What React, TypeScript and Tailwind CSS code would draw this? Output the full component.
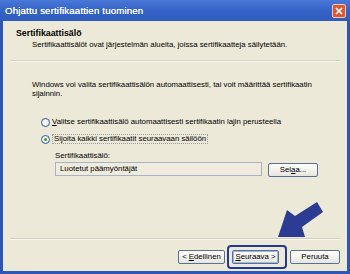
import React from "react";

const font = { fontFamily: '"Liberation Sans", Arial, sans-serif' };

function Radio({ checked }: { checked?: boolean }) {
  return (
    <span className="flex h-[9px] w-[9px] items-center justify-center rounded-full border border-[#2a5a94] bg-[#f4f3ee]">
      {checked && <span className="h-[3px] w-[3px] rounded-full bg-[#2ea52e]" />}
    </span>
  );
}

function Btn({ children, w, def }: { children: React.ReactNode; w: string; def?: boolean }) {
  return (
    <div
      className={`flex h-[14px] items-center justify-center rounded-[2px] border border-[#5a6f94] bg-gradient-to-b from-[#ffffff] to-[#e6e5de] text-[7.8px] leading-none text-black ${w} ${
        def ? "shadow-[inset_0_0_0_1px_#9db5e3]" : ""
      }`}
    >
      {children}
    </div>
  );
}

export default function App() {
  return (
    <div className="relative flex h-[274px] w-[350px] flex-col bg-[#2e56b6]" style={font}>
      {/* title bar */}
      <div className="flex h-[21px] items-center justify-between bg-gradient-to-b from-[#4a78d8] via-[#3463c6] to-[#2f5bbd] pl-[5px] pr-[4px]">
        <span className="text-[9.7px] leading-none tracking-[0.15px] text-white [text-shadow:0_0_0.4px_white]">
          Ohjattu sertifikaattien tuominen
        </span>
        <div className="flex h-[14px] w-[14px] items-center justify-center rounded-[2px] border border-[#f0c8b8] bg-[#da5a38]">
          <svg width="8" height="8" viewBox="0 0 8 8">
            <path d="M1 1 L7 7 M7 1 L1 7" stroke="white" strokeWidth="1.7" />
          </svg>
        </div>
      </div>

      {/* body */}
      <div className="mx-[3px] mb-[3px] flex flex-1 flex-col bg-[#ece9d8] text-[7.8px] text-black">
        <div className="pl-[13px] pt-[7px]">
          <div className="text-[8.8px] font-bold leading-[10px]">Sertifikaattisälö</div>
          <div className="mt-[2px] whitespace-nowrap pl-[16px] leading-[10px]">
            Sertifikaattisälöt ovat järjestelmän alueita, joissa sertifikaatteja säilytetään.
          </div>
        </div>
        <div className="mx-[7px] mt-[10px] border-t border-b border-t-[#d2cfc0] border-b-[#f8f7f1]" />

        <div className="whitespace-nowrap pl-[29px] pt-[18px] leading-[9px]">
          Windows voi valita sertifikaattisälön automaattisesti, tai voit määrittää sertifikaatin
          <br />
          sijainnin.
        </div>

        <div className="mt-[18px] flex flex-col gap-[5px] pl-[38px]">
          <div className="flex h-[12px] items-center gap-[2px]">
            <Radio />
            <span className="whitespace-nowrap leading-none">
              <span className="underline">V</span>alitse sertifikaattisälö automaattisesti sertifikaatin lajin perusteella
            </span>
          </div>
          <div className="flex h-[12px] items-center gap-[2px]">
            <Radio checked />
            <span className="whitespace-nowrap border border-dotted border-[#9a9a9a] px-[1px] leading-none">
              Sijoita kaikki sertifikaatit seuraavaan säilöön
            </span>
          </div>
        </div>

        <div className="mt-[6px] pl-[52px] leading-[10px]">Sertifikaattisälö:</div>
        <div className="mt-[1px] flex items-start gap-[6px] pl-[52px]">
          <div className="flex h-[14px] w-[207px] items-center border border-[#a7b4c4] bg-[#efebdd] pl-[4px] leading-none">
            Luotetut päämyöntäjät
          </div>
          <div className="mt-[1px]">
            <Btn w="w-[50px]">
              Sel<span className="underline">a</span>a...
            </Btn>
          </div>
        </div>

        <div className="flex-1" />
        <div className="mx-[7px] border-t border-b border-t-[#d2cfc0] border-b-[#f8f7f1]" />
        <div className="flex justify-end pr-[7px] pt-[10px] pb-[7px]">
          <Btn w="w-[47px]">
            &lt; <span className="ml-[2px] underline">E</span>dellinen
          </Btn>
          <div className="relative ml-[7px]">
            <Btn w="w-[47px]" def>
              <span className="underline">S</span>euraava &gt;
            </Btn>
            <div className="pointer-events-none absolute -left-[5px] -right-[8px] -top-[5px] -bottom-[5px] rounded-[4px] border-2 border-[#243a8c]" />
          </div>
          <div className="ml-[11px]">
            <Btn w="w-[50px]">Peruuta</Btn>
          </div>
        </div>
      </div>

      {/* annotation arrow */}
      <svg className="pointer-events-none absolute inset-0" width="350" height="274" viewBox="0 0 350 274">
        <polygon
          points="278,237 287,210 295,216 317,202 323,212 302,227 305,237"
          fill="#2b3c92"
        />
      </svg>
    </div>
  );
}
